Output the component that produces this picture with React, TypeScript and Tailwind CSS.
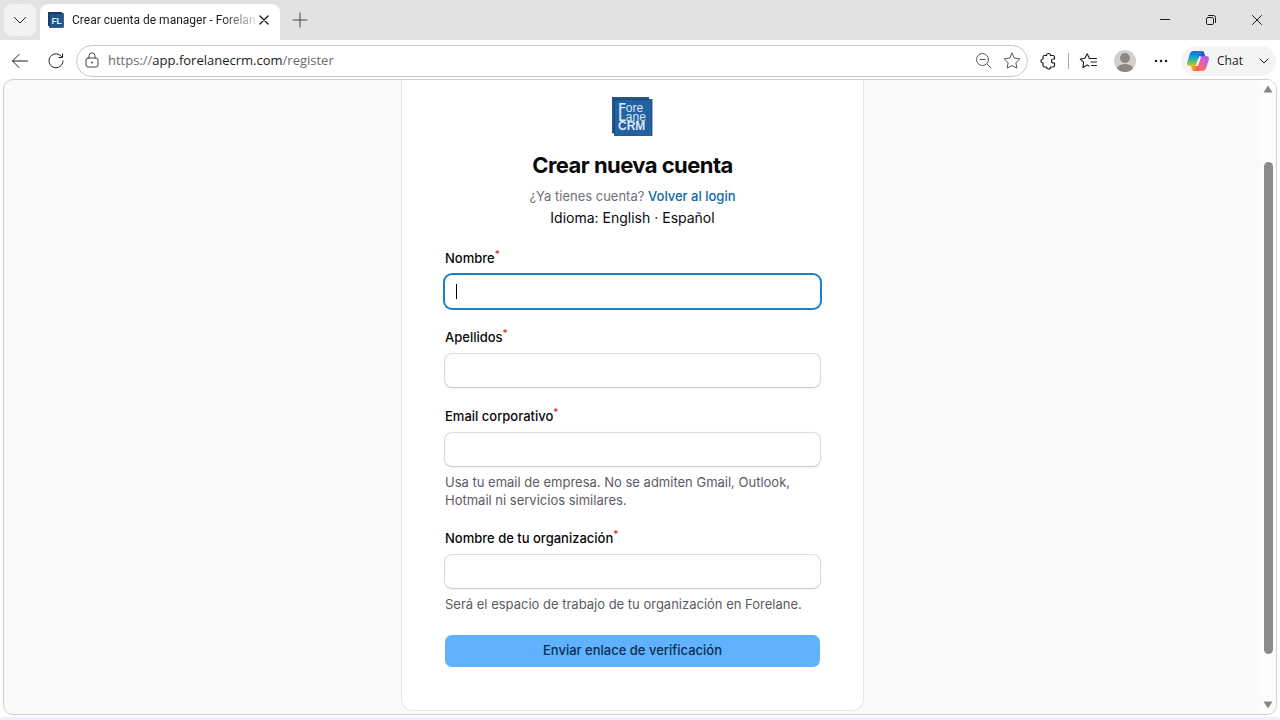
import React from "react";

type FieldProps = {
  id: string;
  label: string;
  type?: string;
  help?: string;
  active?: boolean;
};

const fields: FieldProps[] = [
  { id: "nombre", label: "Nombre", active: true },
  { id: "apellidos", label: "Apellidos" },
  {
    id: "email",
    label: "Email corporativo",
    type: "email",
    help: "Usa tu email de empresa. No se admiten Gmail, Outlook, Hotmail ni servicios similares.",
  },
  {
    id: "organizacion",
    label: "Nombre de tu organización",
    help: "Será el espacio de trabajo de tu organización en Forelane.",
  },
];

type IconProps = {
  size?: number;
  className?: string;
  children: React.ReactNode;
};

const Icon = ({ size = 20, className = "", children }: IconProps) => (
  <svg
    width={size}
    height={size}
    viewBox={`0 0 ${size} ${size}`}
    fill="none"
    stroke="currentColor"
    strokeWidth="1"
    strokeLinecap="round"
    strokeLinejoin="round"
    className={`shrink-0 ${className}`}
    aria-hidden="true"
  >
    {children}
  </svg>
);

const Favicon = () => (
  <svg width="16" height="16" viewBox="0 0 16 16" className="shrink-0" aria-hidden="true">
    <rect width="14" height="14" x="0" y="0" fill="#173f6b" />
    <rect width="14" height="14" x="1.5" y="1.5" fill="#1d5590" stroke="#123558" strokeWidth="0.6" />
    <text x="8.6" y="11.8" textAnchor="middle" fontSize="8.5" fontWeight="700" fill="#dbe8f5" fontFamily="Liberation Sans, sans-serif">
      FL
    </text>
  </svg>
);

const Logo = () => (
  <svg
    width="42"
    height="40"
    viewBox="0 0 42 40"
    role="img"
    aria-label="ForeLane CRM"
    fill="#dce7f3"
    fontFamily="Liberation Sans, sans-serif"
  >
    <rect x="0.500" y="0.5" width="36" height="35.500" fill="#24588f" stroke="#173d66" strokeWidth="0.800" />
    <rect x="2.500" y="2.500" width="37.500" height="36" fill="#2162a3" stroke="#1b436f" strokeWidth="0.800" />
    <text x="6.500" y="14.500" fontSize="12">
      <tspan fontWeight="700">F</tspan>ore
    </text>
    <text x="6.500" y="23.500" fontSize="12">
      <tspan fontWeight="700">L</tspan>ane
    </text>
    <text x="6" y="32.500" fontSize="12" fontWeight="700">
      CRM
    </text>
  </svg>
);

const CopilotLogo = () => (
  <svg width="22" height="20" viewBox="0 0 22 20" className="shrink-0" aria-hidden="true">
    <defs>
      <linearGradient id="cp-left" x1="0" y1="0" x2="0" y2="1">
        <stop offset="0" stopColor="#1668d8" />
        <stop offset="0.45" stopColor="#16a5d8" />
        <stop offset="0.72" stopColor="#5fc05a" />
        <stop offset="1" stopColor="#f0c419" />
      </linearGradient>
      <linearGradient id="cp-right" x1="0.8" y1="0" x2="0.2" y2="1">
        <stop offset="0" stopColor="#a45cf0" />
        <stop offset="0.5" stopColor="#ee5fa4" />
        <stop offset="1" stopColor="#fb7a45" />
      </linearGradient>
      <linearGradient id="cp-top" x1="0" y1="0" x2="1" y2="0.6">
        <stop offset="0" stopColor="#1c8ee8" />
        <stop offset="1" stopColor="#1747b8" />
      </linearGradient>
      <linearGradient id="cp-bottom" x1="0" y1="0" x2="1" y2="0">
        <stop offset="0" stopColor="#f7b52c" />
        <stop offset="1" stopColor="#ef4f4f" />
      </linearGradient>
    </defs>
    <path d="M6.800 0h8c-1.200.4-1.700 1.300-2.100 2.600L9.700 12.400C9.100 14.400 8 15 6 15H3c-2.400 0-3.400-1.500-2.700-4L2.800 3C3.400 1 4.700 0 6.800 0z" fill="url(#cp-left)" />
    <path d="M15.200 20h-8c1.200-.4 1.700-1.300 2.100-2.600l3-9.800C12.900 5.600 14 5 16 5h3c2.400 0 3.400 1.500 2.700 4l-2.500 8c-.6 2-1.900 3-4 3z" fill="url(#cp-right)" />
    <path d="M10 0h5.200c1.100 0 1.700.8 2 1.800l.9 3.200h-2.600c-1.800 0-2.700 1-3.200 2.600L11.400 10z" fill="url(#cp-top)" />
    <path d="M12 20H6.800c-1.100 0-1.700-.8-2-1.800L3.900 15h2.600c1.800 0 2.700-1 3.200-2.600l.9-2.400z" fill="url(#cp-bottom)" />
    <path d="m12.600 5.500-3.400 9.300 1.400-.2 3-8.600z" fill="#f4f4f4" stroke="#f4f4f4" />
  </svg>
);

const TabStrip = () => (
  <header className="flex h-10 items-end bg-[#e2e2e2] text-[#1b1b1b]">
    <button
      type="button"
      aria-label="Acciones de pestaña"
      className="mb-1 ml-1 flex h-8 w-8 items-center justify-center rounded-lg bg-[#f2f2f2]"
    >
      <Icon size={16}>
        <path d="M2.500 5.500 8 11l5.500-5.500" />
      </Icon>
    </button>
    <div className="ml-1 flex h-9 w-60 items-center rounded-t-lg bg-white pr-2 pb-1 pl-2">
      <Favicon />
      <span className="ml-2 flex-1 overflow-hidden bg-linear-to-r from-[#1b1b1b] from-80% to-[#dddddd] bg-clip-text font-[Roboto,sans-serif] text-xs whitespace-nowrap text-transparent">
        Crear cuenta de manager - Forelane
      </span>
      <button type="button" aria-label="Cerrar pestaña" className="flex h-4 w-4 items-center justify-center">
        <Icon size={16}>
          <path d="m4 4 8 8M12 4l-8 8" strokeWidth="1.3" />
        </Icon>
      </button>
    </div>
    <button type="button" aria-label="Nueva pestaña" className="mb-1 ml-1 flex h-8 w-8 items-center justify-center text-[#444444]">
      <Icon size={16}>
        <path d="M8 1v14M1 8h14" />
      </Icon>
    </button>
    <div className="ml-auto flex h-10 items-center">
      <button type="button" aria-label="Minimizar" className="flex h-8 w-[46px] items-center justify-center">
        <Icon size={16}>
          <path d="M3.500 7.500h9" />
        </Icon>
      </button>
      <button type="button" aria-label="Restaurar" className="flex h-8 w-[46px] items-center justify-center">
        <Icon size={16}>
          <rect x="3.500" y="5.500" width="7" height="7" rx="1.200" />
          <path d="M5.500 3.500h5a2 2 0 0 1 2 2v5" />
        </Icon>
      </button>
      <button type="button" aria-label="Cerrar" className="flex h-8 w-[46px] items-center justify-center">
        <Icon size={16}>
          <path d="m3.500 3.500 9 9M12.500 3.500l-9 9" />
        </Icon>
      </button>
    </div>
  </header>
);

const Toolbar = () => (
  <nav className="flex h-[39px] items-center bg-white pt-[2px] text-[#1f1f1f]">
    <button type="button" aria-label="Atrás" className="ml-[10px]">
      <Icon>
        <path d="M17.500 10h-15M9 3.500 2.500 10 9 16.500" />
      </Icon>
    </button>
    <button type="button" aria-label="Actualizar" className="ml-4">
      <Icon>
        <path d="M16 6.200A7 7 0 1 0 17 10M16.500 3v3.500H13" />
      </Icon>
    </button>
    <div className="ml-[10px] flex h-8 min-w-0 flex-1 items-center rounded-full border border-[#c9c9c9] px-[5px]">
      <Icon className="text-[#444444]">
        <rect x="4" y="7" width="12" height="9" rx="2" />
        <path d="M7 7V4.800a3 3 0 0 1 6 0V7" />
        <circle cx="10" cy="11.500" r="0.900" fill="currentColor" stroke="none" />
      </Icon>
      <p className="ml-[6px] flex-1 truncate text-[13px] text-[#6b6b6b]">
        https://<span className="text-[#1b1b1b]">app.forelanecrm.com</span>/register
      </p>
      <button type="button" aria-label="Zoom" className="text-[#555555]">
        <Icon>
          <circle cx="8.500" cy="8.500" r="6" />
          <path d="m13 13 4 4M6 8.500h5" />
        </Icon>
      </button>
      <button type="button" aria-label="Agregar a favoritos" className="ml-2 text-[#555555]">
        <Icon>
          <path d="m10 2.200 2.400 4.900 5.400.8-3.900 3.800.9 5.400-4.800-2.500-4.800 2.500.9-5.400-3.900-3.800 5.400-.8z" />
        </Icon>
      </button>
    </div>
    <button type="button" aria-label="Extensiones" className="ml-[10px]">
      <Icon>
        <path d="M8.500 4.500a2 2 0 0 1 4 0h2.500a1.500 1.500 0 0 1 1.500 1.500v2h-1a2 2 0 0 0 0 4h1v2.500a1.500 1.500 0 0 1-1.500 1.500h-2.500a2 2 0 0 1-4 0H6.500A1.500 1.500 0 0 1 5 14.500V12a2 2 0 0 1 0-4V6a1.500 1.500 0 0 1 1.500-1.500z" strokeWidth="1.200" />
      </Icon>
    </button>
    <span className="ml-[10px] h-4 w-px bg-[#a8a8a8]" />
    <button type="button" aria-label="Favoritos" className="ml-[10px]">
      <Icon>
        <path d="M10.500 7.500h7M12 11h5.500M12.500 14.500h5M10.500 7.500 8.200 2.800 5.900 7.300l-4.600.7 3.400 3.400-.8 5 4.300-2.300 1.800.9" strokeWidth="1.100" />
      </Icon>
    </button>
    <button type="button" aria-label="Perfil" className="ml-[15px]">
      <svg width="22" height="22" viewBox="0 0 22 22" aria-hidden="true">
        <clipPath id="avatar">
          <circle cx="11" cy="11" r="11" />
        </clipPath>
        <g clipPath="url(#avatar)">
          <rect width="22" height="22" fill="#d2d0ce" />
          <circle cx="11" cy="8" r="5" fill="#8a8785" />
          <ellipse cx="11" cy="19" rx="8" ry="5" fill="#8a8785" />
        </g>
      </svg>
    </button>
    <button type="button" aria-label="Configuración y más" className="ml-[15px]">
      <Icon>
        <path d="M5 10h.01M10 10h.01M15 10h.01" strokeWidth="2.600" />
      </Icon>
    </button>
    <button type="button" className="mr-1 ml-[10px] flex h-[30px] items-center rounded-full bg-[#f4f4f4] pr-1 pl-[6px] text-xs">
      <CopilotLogo />
      <span className="ml-[7px] w-7">Chat</span>
      <Icon size={16} className="ml-[12px]">
        <path d="m4 6 4 4 4-4" />
      </Icon>
    </button>
  </nav>
);

const Field = ({ id, label, type = "text", help, active }: FieldProps) => (
  <div className="flex flex-col">
    <label htmlFor={id} className="flex h-[18px] items-center text-[13px] font-medium text-[#09090b]">
      {label}
      <sup className="text-[10px] text-[#dc2626]">*</sup>
    </label>
    <div className="relative mt-[7px]">
      <input
        id={id}
        type={type}
        required
        className={`block h-[33px] w-full rounded-[7px] bg-white px-[11px] text-[13px] outline-none ${
          active ? "ring-2 ring-[#1c80c6]" : "shadow-sm ring-1 ring-[#09090b]/12"
        }`}
      />
      {active && <span className="absolute top-[9px] left-[11px] h-[15px] w-px bg-black" />}
    </div>
    {help && <p className="mt-[7px] text-[13px] leading-[18px] text-[#5b5b64]">{help}</p>}
  </div>
);

const RegisterCard = () => (
  <section className="w-[463px] rounded-b-xl border-x border-b border-[#e6e6e8] bg-white px-[43px] pt-[17px] pb-[43px] font-[Inter,sans-serif]">
    <div className="flex flex-col items-center">
      <Logo />
      <h1 className="mt-[14px] text-[22px] leading-7 font-bold tracking-tight text-[#09090b]">Crear nueva cuenta</h1>
      <p className="mt-2 text-[13px] leading-[18px] text-[#71717a]">
        ¿Ya tienes cuenta?{" "}
        <a href="#login" className="font-medium text-[#0b69a8]">
          Volver al login
        </a>
      </p>
      <p className="mt-[2px] text-[14px] leading-[22px] text-[#09090b]">
        Idioma: <a href="#en">English</a> · <a href="#es">Español</a>
      </p>
    </div>
    <form className="mt-[21px]" onSubmit={(e) => e.preventDefault()}>
      <div className="flex flex-col gap-[21px]">
        {fields.map((f) => (
          <Field key={f.id} {...f} />
        ))}
      </div>
      <button
        type="submit"
        className="mt-[22px] h-8 w-full rounded-[7px] bg-[#60b2ff] text-[13px] font-medium text-[#082f52]"
      >
        Enviar enlace de verificación
      </button>
    </form>
  </section>
);

const Scrollbar = () => (
  <div className="flex w-4 flex-col items-center bg-[#fcfcfc] pt-[5px] pb-[5px]" aria-hidden="true">
    <svg width="10" height="8" viewBox="0 0 10 8" fill="#858585">
      <path d="M5 .5 9.500 7.500H.5z" />
    </svg>
    <div className="mt-[69px] mb-[47px] w-[9px] flex-1 rounded-full bg-[#8b8b8b]" />
    <svg width="10" height="8" viewBox="0 0 10 8" fill="#858585">
      <path d="M5 7.500 9.500.5H.5z" />
    </svg>
  </div>
);

const App = () => {
  return (
    <div className="flex min-h-screen flex-col bg-white font-['Open_Sans',sans-serif]">
      <TabStrip />
      <Toolbar />
      <main className="mx-[3px] flex flex-1 overflow-hidden rounded-[10px] border border-[#cfcfcf] bg-[#fafafa]">
        <div className="flex flex-1 items-start justify-center pb-[3px] pl-px">
          <RegisterCard />
        </div>
        <Scrollbar />
      </main>
      <div className="mt-[2px] h-[3px] bg-[#eef2f8]" />
    </div>
  );
};

export default App;
